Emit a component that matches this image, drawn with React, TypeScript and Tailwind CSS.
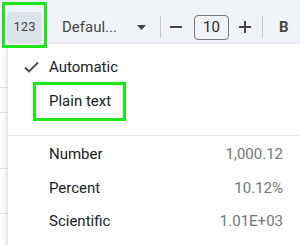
export default function App() {
  return (
    <div
      className="relative w-[300px] h-[245px] overflow-hidden bg-white text-[#202124]"
      style={{ fontFamily: "Roboto, 'Noto Sans', sans-serif" }}
    >
      {/* Toolbar */}
      <div className="h-[44px] pt-[10px] bg-[#f0f4f9] flex items-center text-[#444746]">
        <div className="ml-[7px] w-[35px] h-[31px] rounded-[4px] bg-[#dde3ea] flex items-center justify-center text-[13px]">
          123
        </div>
        <div className="ml-[20px] text-[15px]">Defaul...</div>
        <svg className="ml-[20px]" width="9" height="5" viewBox="0 0 9 5">
          <path d="M0 0h9L4.5 5z" fill="#444746" />
        </svg>
        <div className="ml-[14px] w-px h-[22px] bg-[#c7c7c7]" />
        <div className="ml-[9px] w-[12px] h-[2px] bg-[#444746]" />
        <div className="ml-[12px] w-[35px] h-[25px] rounded-[4px] border border-[#747775] flex items-center justify-center text-[15px] text-[#1f1f1f]">
          10
        </div>
        <svg className="ml-[10px]" width="12" height="12" viewBox="0 0 12 12">
          <path d="M6 0v12M0 6h12" stroke="#444746" strokeWidth="2" />
        </svg>
        <div className="ml-[11px] w-px h-[22px] bg-[#c7c7c7]" />
        <div className="ml-[16px] text-[15px] font-bold">B</div>
      </div>

      {/* sheet behind menu */}
      <div className="absolute left-0 top-[44px] w-[8px] h-[201px]">
        <div className="absolute left-0 top-[43px] w-full h-px bg-[#e1e1e1]" />
        <div className="absolute left-0 top-[68px] w-full h-px bg-[#e1e1e1]" />
        <div className="absolute left-0 top-[124px] w-full h-px bg-[#e1e1e1]" />
        <div className="absolute left-0 top-[169px] w-full h-px bg-[#e1e1e1]" />
      </div>

      {/* Menu */}
      <div className="absolute left-[7px] top-[44px] right-0 bottom-0 bg-white border-l border-[#e3e3e3] shadow-[0_2px_6px_rgba(0,0,0,0.15)] text-[15px]">
        <div className="h-[13px]" />
        <div className="h-[20px] flex items-center">
          <svg className="ml-[16px]" width="15" height="12" viewBox="0 0 15 12">
            <path d="M1 6.5l4 4L14 1.5" stroke="#444746" strokeWidth="1.8" fill="none" />
          </svg>
          <span className="ml-[10px]">Automatic</span>
        </div>
        <div className="mt-[5px] ml-[25px] w-[93px] h-[39px] border-[3px] border-[#1de61a] flex items-center">
          <span className="ml-[13px]">Plain text</span>
        </div>
        <div className="mt-[14px] h-px bg-[#e3e3e3]" />
        <div className="pr-[17px]">
          <div className="h-[35px] mt-[1px] flex items-center justify-between pl-[41px]">
            <span>Number</span>
            <span className="text-[#757575]">1,000.12</span>
          </div>
          <div className="h-[33px] flex items-center justify-between pl-[41px]">
            <span>Percent</span>
            <span className="text-[#757575]">10.12%</span>
          </div>
          <div className="h-[33px] flex items-center justify-between pl-[41px]">
            <span>Scientific</span>
            <span className="text-[#757575]">1.01E+03</span>
          </div>
        </div>
      </div>

      {/* highlight around the 123 button */}
      <div className="absolute left-[2px] top-[2px] w-[45px] h-[46px] border-[3px] border-[#1de61a]" />
    </div>
  );
}
